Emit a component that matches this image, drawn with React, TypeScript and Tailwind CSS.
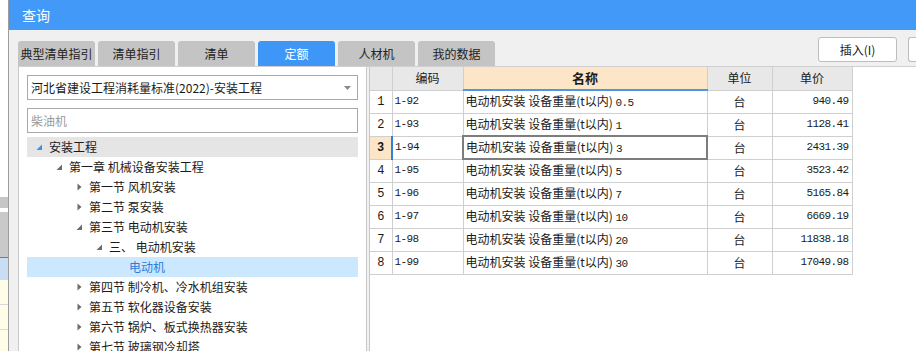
import React from "react";

const ui = { fontFamily: '"Noto Sans CJK SC", "Noto Sans", sans-serif' };
const mono = { fontFamily: '"Liberation Mono", "Noto Sans CJK SC", monospace' };

type Node = { label: string; level: number; state: "open" | "closed" | "leaf"; root?: boolean; selected?: boolean };

const tree: Node[] = [
  { label: "安装工程", level: 0, state: "open", root: true },
  { label: "第一章 机械设备安装工程", level: 1, state: "open" },
  { label: "第一节 风机安装", level: 2, state: "closed" },
  { label: "第二节 泵安装", level: 2, state: "closed" },
  { label: "第三节 电动机安装", level: 2, state: "open" },
  { label: "三、 电动机安装", level: 3, state: "open" },
  { label: "电动机", level: 4, state: "leaf", selected: true },
  { label: "第四节 制冷机、冷水机组安装", level: 2, state: "closed" },
  { label: "第五节 软化器设备安装", level: 2, state: "closed" },
  { label: "第六节 锅炉、板式换热器安装", level: 2, state: "closed" },
  { label: "第七节 玻璃钢冷却塔", level: 2, state: "closed" },
];

const rows = [
  ["1-92", "0.5", "940.49"],
  ["1-93", "1", "1128.41"],
  ["1-94", "3", "2431.39"],
  ["1-95", "5", "3523.42"],
  ["1-96", "7", "5165.84"],
  ["1-97", "10", "6669.19"],
  ["1-98", "20", "11838.18"],
  ["1-99", "30", "17049.98"],
];

const tabs = ["典型清单指引", "清单指引", "清单", "定额", "人材机", "我的数据"];

function Arrow({ state, root }: { state: Node["state"]; root?: boolean }) {
  if (state === "leaf") return <span className="w-[7px]" />;
  if (state === "open")
    return (
      <svg width="7" height="7" viewBox="0 0 7 7">
        <polygon points="6,0.5 6,6 0.5,6" fill={root ? "#3d8fe0" : "#6b6b6b"} />
      </svg>
    );
  return (
    <svg width="7" height="8" viewBox="0 0 7 8">
      <polygon points="1.5,0.5 5.5,4 1.5,7.5" fill="#6b6b6b" />
    </svg>
  );
}

export default function App() {
  return (
    <div className="flex h-[351px] w-[916px] overflow-hidden bg-white text-[12px] text-[#1a1a1a]" style={ui}>
      {/* app behind the dialog */}
      <div className="flex w-[8px] shrink-0 flex-col overflow-hidden">
        <div className="h-[197px] shrink-0 bg-white" />
        <div className="h-[11px] shrink-0 bg-[#c6c6c6]" />
        <div className="h-[4px] shrink-0 bg-white" />
        <div className="h-[45px] shrink-0 overflow-hidden bg-[#c9c9c9]" />
        <div className="h-[1px] shrink-0 bg-[#7a7a7a]" />
        <div className="h-[22px] shrink-0 bg-[#c9def3]" />
        <div className="h-[25px] shrink-0 border-b border-[#d8d8d8] bg-[#fffde8]" />
        <div className="h-[25px] shrink-0 border-b border-[#d8d8d8] bg-[#fffde8]" />
        <div className="flex-1 bg-[#fffde8]" />
      </div>

      <div className="flex min-w-0 flex-1 flex-col border-l border-[#9c9c9c]">
        <div className="flex h-[30px] shrink-0 items-center bg-[#4399f7] pl-[13px] text-[14px] text-white">查询</div>

        <div className="flex min-h-0 flex-1 flex-col bg-[#f0f0f0] pl-[9px]">
          <div className="flex h-[36px] shrink-0 items-end">
            <div className="flex gap-[3px]">
              {tabs.map((t) => (
                <div
                  key={t}
                  className={`flex h-[25px] w-[77px] items-center justify-center rounded-t-[3px] text-[12px] ${
                    t === "定额" ? "bg-[#3e97f7] text-white" : "bg-[#c4c4c4] text-[#222]"
                  }`}
                >
                  {t}
                </div>
              ))}
            </div>
            <div className="ml-auto flex gap-[11px] self-start pt-[7px]">
              <div className="flex h-[25px] w-[79px] items-center justify-center rounded-[3px] border border-[#bdbdbd] bg-white text-[12px]">
                插入(I)
              </div>
              <div className="h-[25px] w-[8px] rounded-l-[3px] border border-r-0 border-[#bdbdbd] bg-white" />
            </div>
          </div>

          <div className="flex min-h-0 flex-1 border-t border-[#d0d0d0]">
            {/* left panel */}
            <div className="flex w-[349px] shrink-0 flex-col overflow-hidden border-x border-[#c8c8c8] bg-white px-[8px] pt-[8px]">
              <div className="flex h-[25px] shrink-0 items-center border border-[#a9a9a9] pl-[3px] pr-[6px] text-[12px]">
                <span>河北省建设工程消耗量标准(2022)-安装工程</span>
                <svg className="ml-auto" width="7" height="4" viewBox="0 0 7 4">
                  <polygon points="0,0 7,0 3.5,4" fill="#8a8a8a" />
                </svg>
              </div>
              <div className="mt-[8px] flex h-[25px] shrink-0 items-center border border-[#a9a9a9] pl-[3px] text-[12px] text-[#9a9a9a]">
                柴油机
              </div>
              <div className="mt-[4px] flex shrink-0 flex-col">
                {tree.map((n) => (
                  <div
                    key={n.label}
                    className={`flex h-[20px] shrink-0 items-center gap-[6px] text-[12px] ${
                      n.root ? "bg-[#e5e5e5]" : n.selected ? "bg-[#cce8ff] text-[#2f7bd9]" : ""
                    }`}
                    style={{ paddingLeft: 9 + n.level * 20 }}
                  >
                    <Arrow state={n.state} root={n.root} />
                    <span className="whitespace-pre">{n.label}</span>
                  </div>
                ))}
              </div>
            </div>

            {/* right panel */}
            <div className="ml-[2px] min-w-0 flex-1 border-l border-[#c8c8c8] bg-white">
              <table className="table-fixed border-collapse text-[12px]" style={{ width: 482 }}>
                <colgroup>
                  <col style={{ width: 22 }} />
                  <col style={{ width: 71 }} />
                  <col style={{ width: 244 }} />
                  <col style={{ width: 65 }} />
                  <col style={{ width: 80 }} />
                </colgroup>
                <thead>
                  <tr className="h-[23px]">
                    <th className="border border-t-0 border-l-0 border-[#cfcfcf] bg-[#e8e8e8]" />
                    <th className="border border-t-0 border-[#cfcfcf] bg-[#e8e8e8] font-normal">编码</th>
                    <th className="border border-t-0 border-b-2 border-[#cfcfcf] border-b-[#4a97e8] bg-[#fde6c8] text-[13px] font-bold">名称</th>
                    <th className="border border-t-0 border-[#cfcfcf] bg-[#e8e8e8] font-normal">单位</th>
                    <th className="border border-t-0 border-[#cfcfcf] bg-[#e8e8e8] font-normal">单价</th>
                  </tr>
                </thead>
                <tbody>
                  {rows.map(([code, w, price], i) => {
                    const cur = i === 2;
                    return (
                      <tr key={code} className="h-[23px]">
                        <td
                          className={`border border-l-0 border-[#cfcfcf] text-center text-[12px] ${
                            cur ? "border-r-2 border-r-[#2f7fe0] bg-[#fde6c8] font-bold" : ""
                          }`}
                          style={mono}
                        >
                          {i + 1}
                        </td>
                        <td className="border border-[#cfcfcf] pl-[2px] text-[11px] tracking-[-0.6px]" style={mono}>
                          {code}
                        </td>
                        <td
                          className={`border pl-[2px] whitespace-pre ${
                            cur ? "border-2 border-[#7d7d7d]" : "border-[#cfcfcf]"
                          }`}
                        >
                          电动机安装 设备重量(t以内) <span className="text-[11px] tracking-[-0.6px]" style={mono}>{w}</span>
                        </td>
                        <td className="border border-[#cfcfcf] text-center">台</td>
                        <td className="border border-[#cfcfcf] pr-[3px] text-right text-[11px] tracking-[-0.6px]" style={mono}>
                          {price}
                        </td>
                      </tr>
                    );
                  })}
                </tbody>
              </table>
            </div>
          </div>
        </div>
      </div>
    </div>
  );
}
